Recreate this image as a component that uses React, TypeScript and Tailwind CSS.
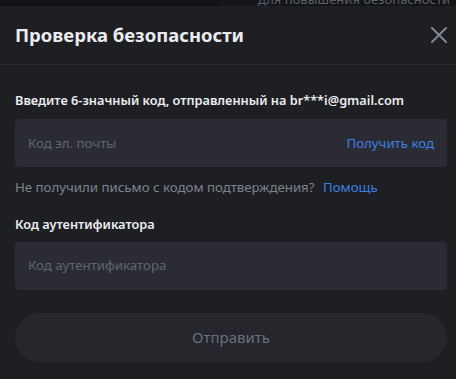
export default function App() {
  const font = { fontFamily: "'Noto Sans', 'Open Sans', sans-serif" };
  return (
    <div className="w-[456px] h-[379px] overflow-hidden bg-[#141518]" style={font}>
      {/* ── страница под модалкой ── */}
      <div className="h-[6px] relative flex">
        <div className="w-[220px] h-full bg-[#121316]" />
        <div className="w-[40px] h-full bg-[#16171a]" />
        <span className="absolute right-[6px] -top-[8px] text-[13px] leading-[14px] text-[#5b5f68] whitespace-nowrap">
          для повышения безопасности
        </span>
      </div>

      {/* ── модалка ── */}
      <div className="bg-[#1e1f23] h-[373px]">
        <div className="h-[59px] flex items-center justify-between pl-[15px] pr-[8px] border-b border-[#2a2b30]">
          <h1 className="text-[18.5px] font-bold text-[#eaecef]">Проверка безопасности</h1>
          <svg width="18" height="18" viewBox="0 0 18 18" className="text-[#848791]">
            <path d="M2 2 L16 16 M16 2 L2 16" stroke="currentColor" strokeWidth="2" strokeLinecap="round" />
          </svg>
        </div>

        <div className="pl-[15px] pr-[9px] pt-[25px]">
          <div className="text-[12.75px] font-semibold text-[#eaecef] leading-[20px]">
            Введите 6-значный код, отправленный на br***i@gmail.com
          </div>
          <div className="mt-[9px] h-[48px] rounded-[4px] bg-[#2b2c33] flex items-center justify-between pl-[13px] pr-[13px]">
            <span className="text-[13.25px] text-[#5e6570] pt-[1px]">Код эл. почты</span>
            <span className="text-[13.25px] text-[#3d7fe0] pt-[1px]">Получить код</span>
          </div>
          <div className="mt-[10px] text-[13.25px] leading-[20px] text-[#7d828c]">
            Не получили письмо с кодом подтверждения?{' '}
            <span className="text-[#3d7fe0] ml-[5px]">Помощь</span>
          </div>

          <div className="mt-[17px] text-[12.75px] font-semibold text-[#eaecef] leading-[20px]">
            Код аутентификатора
          </div>
          <div className="mt-[8px] h-[48px] rounded-[4px] bg-[#2b2c33] flex items-center px-[13px]">
            <span className="text-[13.25px] text-[#5e6570]">Код аутентификатора</span>
          </div>

          <button className="mt-[23px] w-full h-[49px] rounded-full bg-[#26272c] text-[15px] text-[#6b6f78]">
            Отправить
          </button>
        </div>
      </div>
    </div>
  );
}
